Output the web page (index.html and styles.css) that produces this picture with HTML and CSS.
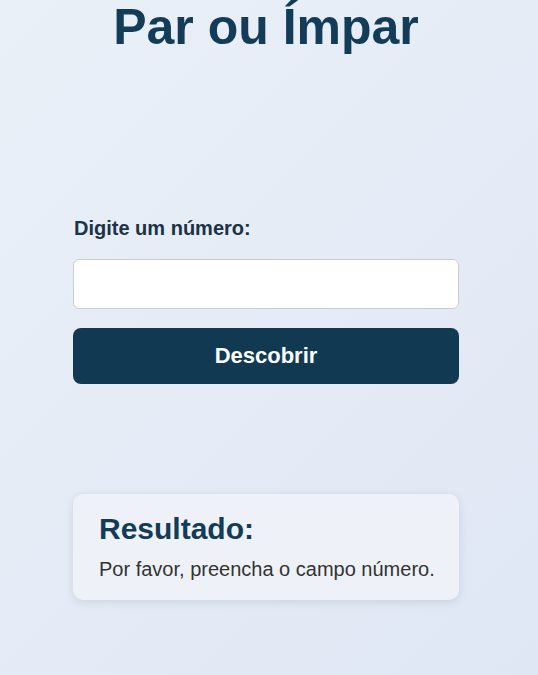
FILE: index.html
```html
<!DOCTYPE html>
<html lang="pt-BR">
<head>
<meta charset="utf-8">
<title>Par ou Ímpar</title>
<link rel="stylesheet" href="styles.css">
</head>
<body>
<main class="container">
  <h1 class="title">Par ou Ímpar</h1>
  <form class="form">
    <label class="label" for="numero">Digite um número:</label>
    <input class="input" id="numero" type="number">
    <button class="button" type="button">Descobrir</button>
  </form>
  <section class="result">
    <h2 class="result-title">Resultado:</h2>
    <p class="result-text">Por favor, preencha o campo número.</p>
  </section>
</main>
</body>
</html>
```
FILE: styles.css
```css
html, body {
  margin: 0;
  padding: 0;
  min-height: 100%;
}
body {
  font-family: "Liberation Sans", Arial, sans-serif;
  background: linear-gradient(135deg, #eaf0f8 0%, #dfe7f4 100%);
  min-height: 675px;
}
.container {
  width: 386px;
  margin-left: 73px;
  display: flex;
  flex-direction: column;
}
.title {
  margin: 0;
  font-size: 50px;
  line-height: 54px;
  font-weight: 700;
  color: #123c57;
  text-align: center;
}
.form {
  margin-top: 162px;
  display: flex;
  flex-direction: column;
}
.label {
  font-size: 20px;
  line-height: 24px;
  font-weight: 700;
  color: #1a3346;
  margin-left: 1px;
}
.input {
  margin-top: 19px;
  height: 50px;
  box-sizing: border-box;
  border: 1px solid #cccccc;
  border-radius: 6px;
  background: #ffffff;
  font-size: 18px;
  padding: 0 12px;
}
.button {
  margin-top: 19px;
  height: 56px;
  border: none;
  border-radius: 8px;
  background: #113a52;
  color: #ffffff;
  font-family: "Liberation Sans", Arial, sans-serif;
  font-size: 22px;
  font-weight: 700;
}
.result {
  margin-top: 110px;
  background: #eef2f8;
  border-radius: 10px;
  box-shadow: 0 2px 8px rgba(30, 50, 80, 0.12);
  padding: 18px 18px 19px 26px;
}
.result-title {
  margin: 0 0 12px;
  font-size: 30px;
  font-weight: 700;
  color: #123c57;
}
.result-text {
  margin: 0;
  font-size: 20px;
  color: #333333;
  white-space: nowrap;
}
```
